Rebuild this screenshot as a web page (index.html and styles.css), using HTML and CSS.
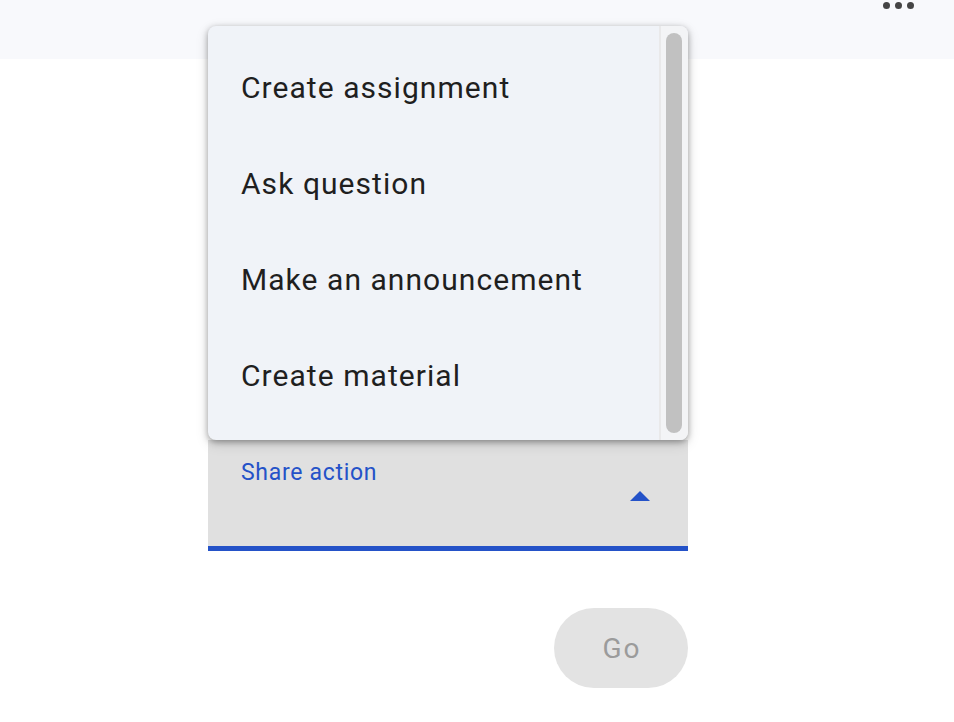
FILE: index.html
```html
<!DOCTYPE html>
<html lang="en">
<head>
<meta charset="utf-8">
<title>Share action</title>
<link rel="stylesheet" href="styles.css">
</head>
<body>
<header class="topbar">
  <button class="more" aria-label="More options">
    <span class="dot"></span><span class="dot"></span><span class="dot"></span>
  </button>
</header>
<main class="content">
  <div class="field-wrap">
    <div class="menu" role="listbox">
      <ul class="menu-list">
        <li class="menu-item">Create assignment</li>
        <li class="menu-item">Ask question</li>
        <li class="menu-item">Make an announcement</li>
        <li class="menu-item">Create material</li>
      </ul>
      <div class="scroll-track"><div class="scroll-thumb"></div></div>
    </div>
    <div class="select">
      <span class="select-label">Share action</span>
      <span class="caret"></span>
    </div>
  </div>
  <div class="actions">
    <button class="go" disabled>Go</button>
  </div>
</main>
</body>
</html>
```

FILE: styles.css
```css
* { box-sizing: border-box; }
html, body { margin: 0; padding: 0; background: #ffffff; }
body {
  font-family: Roboto, "Noto Sans", "Liberation Sans", sans-serif;
  color: #1f1f1f;
  width: 954px;
  height: 722px;
  overflow: hidden;
}
.topbar {
  height: 59px;
  background: #f8f9fc;
  display: flex;
  justify-content: flex-end;
  align-items: flex-start;
  padding: 2px 40px 0 0;
}
.more {
  display: flex;
  gap: 5px;
  border: 0;
  background: transparent;
  padding: 0;
}
.dot {
  width: 7px;
  height: 7px;
  border-radius: 50%;
  background: #454545;
}
.content {
  width: 480px;
  margin-left: 208px;
  padding-top: 381px;
}
.field-wrap { position: relative; }
.menu {
  position: absolute;
  left: 0;
  right: 0;
  bottom: 100%;
  height: 414px;
  background: #f0f3f8;
  border-radius: 8px;
  box-shadow: 0 2px 6px rgba(0,0,0,0.35), 0 4px 14px rgba(0,0,0,0.12);
  display: grid;
  grid-template-columns: 1fr 29px;
  overflow: hidden;
  z-index: 2;
}
.menu-list {
  list-style: none;
  margin: 0;
  padding: 13px 0 17px;
}
.menu-item {
  height: 96px;
  display: flex;
  align-items: center;
  padding-left: 33px;
  font-size: 30px;
  letter-spacing: 1.05px;
  color: #1f1f1f;
}
.scroll-track {
  background: #f3f4f6;
  border-left: 2px solid #e9e9ea;
  padding: 7px 5px 7px 5px;
}
.scroll-thumb {
  width: 16px;
  height: 100%;
  border-radius: 8px;
  background: #c1c1c1;
}
.select {
  height: 111px;
  background: #e0e0e0;
  border-bottom: 5px solid #2452c8;
  position: relative;
  padding: 19px 33px 0;
}
.select-label {
  font-size: 23px;
  letter-spacing: 0.7px;
  color: #2452c8;
}
.caret {
  position: absolute;
  right: 38px;
  top: 51px;
  width: 0;
  height: 0;
  border-left: 10px solid transparent;
  border-right: 10px solid transparent;
  border-bottom: 10px solid #2452c8;
}
.actions {
  display: flex;
  justify-content: flex-end;
  margin-top: 57px;
}
.go {
  width: 134px;
  height: 80px;
  border-radius: 40px;
  border: 0;
  background: #e3e3e3;
  color: #9b9b9b;
  font-family: Roboto, "Noto Sans", sans-serif;
  font-size: 28px;
  letter-spacing: 2px;
  text-indent: 2px;
  padding: 0;
}
```
